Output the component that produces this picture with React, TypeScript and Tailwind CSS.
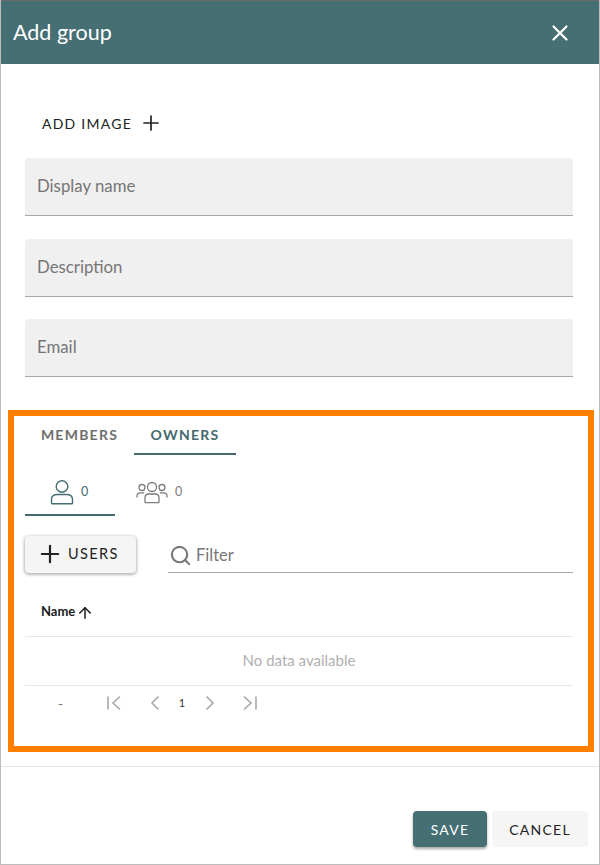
import { ChevronLeft, ChevronRight, Plus, Search, X, ArrowUp } from "lucide-react";

const font = { fontFamily: "Lato, 'Open Sans', sans-serif" };

function Field({ label }: { label: string }) {
  return (
    <div className="h-[58px] rounded-t-[4px] border-b border-[#a8a8a8] bg-[#f0f0f0] px-3 pt-[17px] text-[16.8px] leading-[22px] text-[#767676]">
      {label}
    </div>
  );
}

function UserIcon() {
  return (
    <svg width="24" height="26" viewBox="0 0 24 26" fill="none" stroke="#446e72" strokeWidth="1.4">
      <circle cx="12" cy="7.5" r="5.8" />
      <path d="M1.500 24v-3.500C1.500 17 4 15.500 7.500 15.500h9c3.500 0 6 1.500 6 5V24c0 .5-.3.8-.8.8H2.300c-.5 0-.8-.3-.8-.8z" />
    </svg>
  );
}

function GroupIcon() {
  return (
    <svg width="32" height="24" viewBox="0 0 32 24" fill="none" stroke="#7d7d7d" strokeWidth="1.3">
      <circle cx="16" cy="6" r="4.500" />
      <circle cx="6" cy="6.500" r="3" />
      <circle cx="26" cy="6.500" r="3" />
      <path d="M9 21v-4c0-2.500 1.500-4 4-4h6c2.500 0 4 1.500 4 4v4c0 .4-.3.6-.6.600H9.600C9.300 21.600 9 21.400 9 21z" />
      <path d="M1 16.500v-1.500c0-2 1.500-3.200 3.500-3.200H8" />
      <path d="M31 16.500v-1.500c0-2-1.500-3.200-3.500-3.200H24" />
    </svg>
  );
}

export default function App() {
  return (
    <div
      style={font}
      className="relative flex h-[865px] w-[600px] flex-col overflow-hidden border border-t-0 border-[#bdbdbd] bg-white"
    >
      {/* Header */}
      <div className="flex h-[64px] shrink-0 items-center justify-between border-t border-[#6a6a6a] bg-[#466f73] pl-3 pr-[26px] text-white">
        <span className="text-[21.5px]">Add group</span>
        <X className="h-[26px] w-[26px]" strokeWidth={2} />
      </div>

      <div className="flex flex-1 flex-col pl-6 pr-[26px]">
        <div className="flex h-[94px] items-center gap-[7px] pl-[17px] pt-[24px] text-[14px] tracking-[1.25px] text-[#222]">
          ADD IMAGE
          <Plus className="h-[24px] w-[24px]" strokeWidth={1.7} />
        </div>

        <div className="flex flex-col gap-[22.5px]">
          <Field label="Display name" />
          <Field label="Description" />
          <Field label="Email" />
        </div>

        {/* Tabs */}
        <div className="mt-[43px] flex h-[35px] text-[14px] font-bold leading-[30px] tracking-[1.25px]">
          <div className="w-[109px] text-center text-[#6f6f6f]">MEMBERS</div>
          <div className="w-[102px] border-b-2 border-[#44696e] text-center text-[#44696e]">OWNERS</div>
        </div>

        <div className="mt-[16px] flex h-[45px] items-start">
          <div className="flex h-[45px] w-[90px] gap-[7px] border-b-2 border-[#44696e] pl-[25px] pt-[8px] text-[12.500px] text-[#44696e]">
            <UserIcon />
            <span className="pt-[4px]">0</span>
          </div>
          <div className="ml-[21px] flex gap-[7px] pt-[10px] text-[12.500px] text-[#7d7d7d]">
            <GroupIcon />
            <span className="pt-[2px]">0</span>
          </div>
        </div>

        {/* Users and filter */}
        <div className="mt-[20px] flex items-start gap-8">
          <div className="flex h-[37px] w-[111px] items-center gap-[4px] rounded-[4px] bg-[#f5f5f5] pb-[2px] pl-[11px] text-[14.500px] tracking-[1.4px] text-[#222] shadow-[0_1px_3px_1px_rgba(0,0,0,0.28)]">
            <Plus className="h-[28px] w-[28px] shrink-0" strokeWidth={1.9} />
            USERS
          </div>
          <div className="flex h-[37px] flex-1 items-center gap-[4px] border-b border-[#a8a8a8] pl-[1px] pt-[3px] text-[16.500px] text-[#777]">
            <Search className="h-[23px] w-[23px]" strokeWidth={2.2} />
            Filter
          </div>
        </div>

        {/* Table */}
        <div className="mt-[27px] flex h-[37px] items-start gap-[1px] border-b border-[#e6e6e6] pl-[16px] pt-[2px] text-[13px] font-bold text-[#1c1c1c]">
          Name
          <ArrowUp className="mt-[2px] h-[18px] w-[18px]" strokeWidth={2} />
        </div>
        <div className="flex h-[49px] items-center justify-center border-b border-[#e6e6e6] pb-[2px] text-[15px] text-[#b0b0b0]">
          No data available
        </div>
        <div className="flex h-[34px] items-center text-[#a9a9a9]">
          <span className="ml-[33px] w-[48px] text-[14px] text-[#777]">-</span>
          <div className="flex items-center">
            <svg width="16" height="16" viewBox="0 0 16 16" fill="none" stroke="currentColor" strokeWidth="1.600">
              <path d="M2 1.500v13M14 1.500 7 8l7 6.500" />
            </svg>
            <ChevronLeft className="ml-[21px] h-[24px] w-[24px]" strokeWidth={1.7} />
            <span className="ml-[9px] w-[12px] text-center text-[11px] text-[#333]">1</span>
            <ChevronRight className="ml-[10px] h-[24px] w-[24px]" strokeWidth={1.700} />
            <svg className="ml-[20px]" width="16" height="16" viewBox="0 0 16 16" fill="none" stroke="currentColor" strokeWidth="1.600">
              <path d="M14 1.500v13M2 1.500 9 8l-7 6.500" />
            </svg>
          </div>
        </div>
      </div>

      {/* Footer */}
      <div className="flex h-[98px] shrink-0 items-start justify-end gap-[5px] border-t border-[#e6e6e6] pr-[11px] pt-[44px] text-[14px] tracking-[1.25px]">
        <div className="flex h-[36px] w-[74px] items-center justify-center rounded-[4px] bg-[#466f73] text-white shadow-[0_2px_3px_rgba(0,0,0,0.35)]">
          SAVE
        </div>
        <div className="flex h-[36px] w-[96px] items-center justify-center rounded-[4px] bg-[#f5f5f5] text-[#222]">
          CANCEL
        </div>
      </div>

      {/* Orange annotation frame */}
      <div className="absolute left-[7px] top-[410px] h-[342px] w-[586px] border-[6px] border-[#ff8000]" />
    </div>
  );
}
